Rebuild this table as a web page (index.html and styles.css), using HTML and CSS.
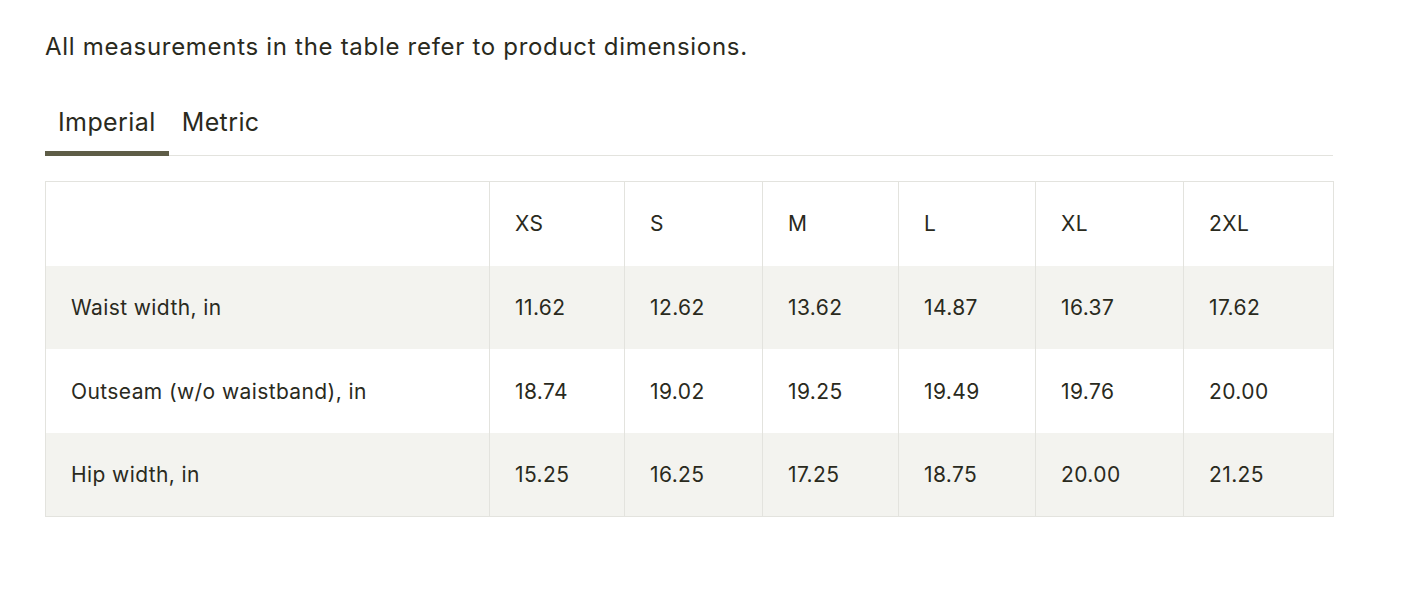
FILE: index.html
```html
<!DOCTYPE html>
<html lang="en">
<head>
<meta charset="utf-8">
<title>Size guide</title>
<link rel="stylesheet" href="styles.css">
</head>
<body>
<div class="page">
  <p class="intro">All measurements in the table refer to product dimensions.</p>
  <div class="tabs">
    <div class="tab active">Imperial</div>
    <div class="tab">Metric</div>
  </div>
  <table class="sizes">
    <thead>
      <tr><th></th><th>XS</th><th>S</th><th>M</th><th>L</th><th>XL</th><th>2XL</th></tr>
    </thead>
    <tbody>
      <tr class="shade"><td>Waist width, in</td><td>11.62</td><td>12.62</td><td>13.62</td><td>14.87</td><td>16.37</td><td>17.62</td></tr>
      <tr><td>Outseam (w/o waistband), in</td><td>18.74</td><td>19.02</td><td>19.25</td><td>19.49</td><td>19.76</td><td>20.00</td></tr>
      <tr class="shade"><td>Hip width, in</td><td>15.25</td><td>16.25</td><td>17.25</td><td>18.75</td><td>20.00</td><td>21.25</td></tr>
    </tbody>
  </table>
</div>
</body>
</html>
```
FILE: styles.css
```css
* { box-sizing: border-box; }
body {
  margin: 0;
  background: #ffffff;
  color: #2a2a1d;
  font-family: "Inter", "Liberation Sans", sans-serif;
}
.page {
  width: 1333px;
  padding: 27px 0 0 45px;
}
.intro {
  margin: 0;
  font-size: 24px;
  line-height: 40px;
  letter-spacing: 0.7px;
}
.tabs {
  display: flex;
  margin-top: 40px;
  border-bottom: 1px solid #e3e3de;
}
.tab {
  font-size: 25px;
  line-height: 30px;
  letter-spacing: 0.4px;
  padding: 0 13px 14px;
  border-bottom: 5px solid transparent;
  margin-bottom: -1px;
}
.tab.active {
  border-bottom-color: #5e5d47;
}
.sizes {
  margin-top: 25px;
  width: 1288px;
  border-collapse: collapse;
  table-layout: fixed;
  border: 1px solid #e3e3de;
}
.sizes th, .sizes td {
  height: 83.7px;
  padding: 0 25px;
  text-align: left;
  font-weight: 400;
  font-size: 21px;
  letter-spacing: 0.4px;
  border-left: 1px solid #e3e3de;
  border-right: 1px solid #e3e3de;
}
.sizes th { height: 84px; }
.sizes th:nth-child(1) { width: 444px; }
.sizes th:nth-child(2) { width: 135px; }
.sizes th:nth-child(3) { width: 138px; }
.sizes th:nth-child(4) { width: 136px; }
.sizes th:nth-child(5) { width: 137px; }
.sizes th:nth-child(6) { width: 148px; }
.sizes th:nth-child(7) { width: 150px; }
.sizes tr.shade { background: #f3f3ef; }
```
